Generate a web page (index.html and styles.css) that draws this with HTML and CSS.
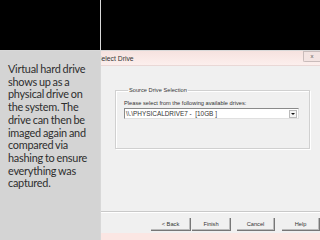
FILE: index.html
```html
<!DOCTYPE html>
<html>
	<head>
		<meta charset="utf-8">
		<title>Select Drive</title>
		<link rel="stylesheet" href="styles.css">
	</head>
	<body>
		<div class="slide">
			<div class="band"></div>
			<div class="band"></div>
			<div class="note">
				<p>Virtual hard drive shows up as a physical drive on the system. The drive can then be imaged again and compared via hashing to ensure everything was captured.</p>
			</div>
			<div class="dialog">
				<div class="titlebar">
					<span class="title">Select Drive</span>
					<span class="close">x</span>
				</div>
				<div class="body">
					<fieldset class="group">
						<legend>Source Drive Selection</legend>
						<div class="hint">Please select from the following available drives:</div>
						<div class="combo">
							<span>\\.\PHYSICALDRIVE7 -&nbsp; [10GB ]</span>
							<span class="arrow"></span>
						</div>
					</fieldset>
				</div>
				<div class="buttons">
					<span class="btn back">&lt; Back</span>
					<span class="btn finish">Finish</span>
					<span class="btn cancel">Cancel</span>
					<span class="btn help">Help</span>
				</div>
				<div class="strip"></div>
			</div>
		</div>
	</body>
</html>
```

FILE: styles.css
```css
*{
	padding: 0;
	margin: 0;
	box-sizing: border-box;
}
body{
	width: 320px;
	height: 240px;
	overflow: hidden;
	background: #000;
}
.slide{
	display: grid;
	grid-template-columns: 100px 219px;
	grid-template-rows: 50px 189px;
	gap: 1px;
	background: #d8d8d8;
	height: 240px;
}
.band{
	background: #000;
}
.note{
	background: #d4d4d4;
	padding: 12px 4px 0 8px;
}
.note p{
	font-family: Lato, "Open Sans", sans-serif;
	font-size: 10.9px;
	letter-spacing: -0.25px;
	word-spacing: -0.5px;
	line-height: 12.7px;
	color: #2e2e2e;
}
.dialog{
	background: #f0f0f0;
	display: flex;
	flex-direction: column;
	overflow: hidden;
	font-family: "Liberation Sans", Arial, sans-serif;
	font-size: 5.7px;
	color: #333;
}
.titlebar{
	height: 15px;
	background: linear-gradient(#f6e2df, #fcefed);
	display: flex;
	align-items: center;
	justify-content: space-between;
	border-bottom: 1px solid #e9d8d6;
}
.title{
	font-size: 6.8px;
	margin-left: -4px;
}
.close{
	width: 17px;
	height: 11px;
	margin-top: -3px;
	border: 1px solid #c9bcbb;
	border-right: none;
	border-radius: 0 0 0 2px;
	font-size: 6px;
	text-align: center;
	line-height: 9px;
	color: #555;
	background: #f3e4e2;
}
.body{
	padding: 21px 10px 0 14px;
	height: 145px;
}
.group{
	border: 1px solid #d0d0d0;
	box-shadow: inset 1px 1px 0 #fff, 1px 1px 0 #fff;
	padding: 7px 10px 0 8px;
	height: 62px;
}
.group legend{
	padding: 0 1px;
	margin-left: 4px;
}
.hint{
	margin-bottom: 2px;
}
.combo{
	height: 11px;
	background: #fff;
	border: 1px solid #8a8a8a;
	border-right-color: #e0e0e0;
	border-bottom-color: #e0e0e0;
	display: flex;
	align-items: center;
	justify-content: space-between;
	padding-left: 1px;
	font-size: 6.4px;
}
.arrow{
	width: 8px;
	height: 8px;
	margin-right: 1px;
	border: 1px solid #bbb;
	background: #f4f4f4;
	position: relative;
}
.arrow::after{
	content: "";
	position: absolute;
	left: 1px;
	top: 2px;
	border-left: 2px solid transparent;
	border-right: 2px solid transparent;
	border-top: 2px solid #111;
}
.buttons{
	border-top: 1px solid #c9c9c9;
	box-shadow: inset 0 1px 0 #fff;
	display: flex;
	padding: 6px 0 0 50px;
	height: 22px;
}
.btn{
	height: 13px;
	border-right: 1px solid #777;
	border-bottom: 1px solid #777;
	box-shadow: inset -1px -1px 0 #bbb;
	text-align: center;
	line-height: 12px;
}
.back{
	width: 40px;
	margin-right: 1px;
}
.finish{
	width: 39px;
	margin-right: 6px;
}
.cancel{
	width: 38px;
	margin-right: 7px;
}
.help{
	width: 38px;
}
.strip{
	flex: 1;
	background: #fbe6e3;
}
```
